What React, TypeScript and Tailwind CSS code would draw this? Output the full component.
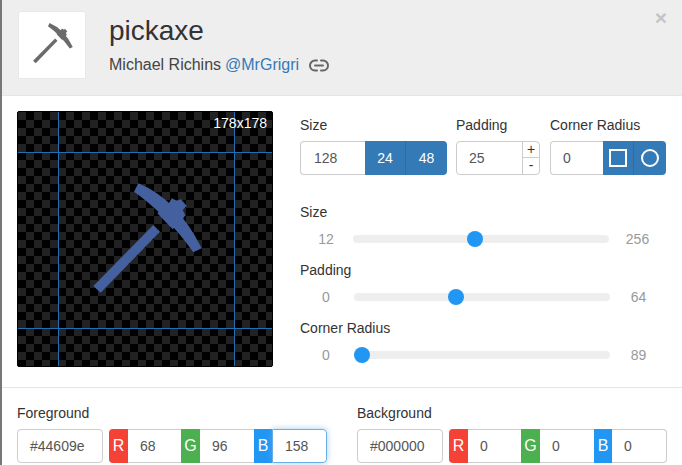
import React from "react";

const labelCls = "text-[14px] leading-[20px] text-[#333]";

function Slider({ label, min, max, left, thumb }: { label: string; min: string; max: string; left: string; thumb: number }) {
  return (
    <div className="h-[58px]">
      <div className={labelCls}>{label}</div>
      <div className="flex items-center h-[20px] mt-[7px]">
        <span className="w-[53px] text-center pr-[1px] text-[14px] text-[#999] leading-[20px]">{min}</span>
        <div className={`relative h-[8px] w-[256px] rounded-full bg-[#eee] ${left}`}>
          <span className="absolute top-[-4px] w-[16px] h-[16px] rounded-full bg-[#2196f3]" style={{ left: thumb }} />
        </div>
        <span className="w-[57px] text-center text-[14px] text-[#999] leading-[20px]">{max}</span>
      </div>
    </div>
  );
}

function ColorGroup({ label, hex, r, g, b, focus, className }: { label: string; hex: string; r: string; g: string; b: string; focus?: boolean; className: string }) {
  const chan = "flex items-center justify-center text-white text-[16px]";
  const field = "flex items-center h-full text-[14px] text-[#555] border-y border-[#ccc]";
  return (
    <div className={className}>
      <div className={labelCls}>{label}</div>
      <div className="flex gap-[6px] mt-[6px] h-[34px]">
        <div className="w-[86px] h-full flex items-center pl-[12px] text-[14px] text-[#555] border border-[#ccc] rounded-[4px]">{hex}</div>
        <div className="flex w-[218px] h-full">
          <div className={`${chan} w-[19px] bg-[#f44336] rounded-l-[4px]`}>R</div>
          <div className={`${field} w-[53px] pl-[12px]`}>{r}</div>
          <div className={`${chan} w-[19px] bg-[#4caf50]`}>G</div>
          <div className={`${field} w-[54px] pl-[12px]`}>{g}</div>
          <div className={`${chan} w-[18px] bg-[#2196f3]`}>B</div>
          <div className={
            focus
              ? "flex items-center h-full flex-1 pl-[12px] text-[14px] text-[#555] border border-[#66afe9] rounded-r-[4px] shadow-[0_0_6px_rgba(102,175,233,0.6)]"
              : "flex items-center h-full flex-1 pl-[12px] text-[14px] text-[#555] border border-l-0 border-[#ccc] rounded-r-[4px]"
          }>{b}</div>
        </div>
      </div>
    </div>
  );
}

function Pickaxe({ fill }: { fill: string }) {
  return (
    <>
      <polygon points="76.3,175 83.7,181.7 143,120.7 136.3,114" fill={fill} />
      <path d="M121.3,72.3 Q160,88 184.7,137.3 L176.3,141.3 Q150,104 117,80.7 Z" fill={fill} />
      <polygon points="140.3,102.3 153,90.7 154.7,87.3 159.7,89.7 164,88.3 169.7,95 165.7,99 168.3,104 165.7,108.3 155.7,118.3" fill={fill} />
    </>
  );
}

export default function App() {
  return (
    <div className="w-[682px] h-[465px] overflow-hidden bg-white flex font-['Liberation_Sans',Arial,sans-serif]">
      <div className="w-[2px] h-full bg-[#777] shrink-0" />
      <div className="flex-1 min-w-0">
        <header className="relative h-[96px] bg-[#eeeeee] border-b border-[#e5e5e5] flex pl-[16px] pt-[11px]">
          <div className="w-[68px] h-[68px] bg-white rounded-[2px] border border-[#e8e8e8] shrink-0">
            <svg width="66" height="66" viewBox="38 42 180 180">
              <Pickaxe fill="#6b6b6b" />
            </svg>
          </div>
          <div className="ml-[23px] mt-[2px]">
            <div className="text-[28px] leading-[36px] text-[#333]">pickaxe</div>
            <div className="flex items-center mt-[6px] h-[20px] text-[16px] text-[#444]">
              <span>Michael Richins</span>
              <span className="ml-[4px] text-[#337ab7]">@MrGrigri</span>
              <svg className="ml-[10px]" width="20" height="13" viewBox="0 0 20 13" fill="none" stroke="#666" strokeWidth="2" strokeLinecap="round">
                <path d="M8 1.5H6a5 5 0 0 0 0 10H8" />
                <path d="M12 1.5h2a5 5 0 0 1 0 10H12" />
                <path d="M6 6.5h8" />
              </svg>
            </div>
          </div>
          <span className="absolute right-[15px] top-[6px] text-[21px] leading-[24px] font-bold text-[#c4c4c4]">×</span>
        </header>

        <main className="flex h-[292px] border-b border-[#e5e5e5] pl-[15px] pt-[15px]">
          <div className="relative w-[256px] h-[256px] rounded-[2px] border border-black overflow-hidden shrink-0 bg-[#000] bg-[conic-gradient(#000_25%,#222_0_50%,#000_0_75%,#222_0)] bg-[length:16px_16px]">
            <svg className="absolute left-[-1px] top-[-1px]" width="256" height="256" viewBox="0 0 256 256">
              <Pickaxe fill="#44609e" />
              <path d="M0 41.5H256M0 217.5H256M41.5 0V256M217.5 0V256" stroke="#1f6fb2" strokeWidth="1" fill="none" />
            </svg>
            <span className="absolute right-[5px] top-[3px] text-[14px] leading-[16px] text-white">178x178</span>
          </div>

          <div className="ml-[27px] flex-1 min-w-0 pt-[4px]">
            <div className="flex">
              <div className="w-[156px]">
                <div className={labelCls}>Size</div>
                <div className="flex h-[34px] mt-[6px] w-[147px] text-[14px]">
                  <div className="w-[65px] flex items-center pl-[13px] text-[#555] border border-r-0 border-[#ccc] rounded-l-[4px]">128</div>
                  <div className="w-[41px] flex items-center justify-center bg-[#337ab7] text-white border-r border-[#2e6da4]">24</div>
                  <div className="w-[41px] flex items-center justify-center bg-[#337ab7] text-white rounded-r-[4px]">48</div>
                </div>
              </div>
              <div className="w-[94px]">
                <div className={labelCls}>Padding</div>
                <div className="flex h-[34px] mt-[6px] w-[84px] border border-[#ccc] rounded-[4px] text-[14px] text-[#555]">
                  <div className="w-[66px] flex items-center pl-[12px] border-r border-[#ccc]">25</div>
                  <div className="flex-1 flex flex-col text-[#333] text-[14px] leading-[15px] text-center">
                    <span className="h-[16px] border-b border-[#ccc]">+</span>
                    <span className="h-[16px]">-</span>
                  </div>
                </div>
              </div>
              <div>
                <div className={labelCls}>Corner Radius</div>
                <div className="flex h-[34px] mt-[6px] w-[116px]">
                  <div className="w-[53px] flex items-center pl-[12px] text-[14px] text-[#555] border border-r-0 border-[#ccc] rounded-l-[4px]">0</div>
                  <div className="w-[31px] flex items-center justify-center bg-[#337ab7] border-r border-[#2e6da4]">
                    <span className="block w-[18px] h-[18px] border-2 border-white" />
                  </div>
                  <div className="w-[32px] flex items-center justify-center bg-[#337ab7] rounded-r-[4px]">
                    <span className="block w-[18px] h-[18px] border-2 border-white rounded-full" />
                  </div>
                </div>
              </div>
            </div>
            <div className="mt-[27px]">
              <Slider label="Size" min="12" max="256" left="" thumb={114} />
              <Slider label="Padding" min="0" max="64" left="ml-[1px]" thumb={94} />
              <Slider label="Corner Radius" min="0" max="89" left="ml-[1px]" thumb={0} />
            </div>
          </div>
        </main>

        <section className="flex pl-[15px] pt-[15px]">
          <ColorGroup className="w-[340px]" label="Foreground" hex="#44609e" r="68" g="96" b="158" focus />
          <ColorGroup className="w-[310px]" label="Background" hex="#000000" r="0" g="0" b="0" />
        </section>
      </div>
    </div>
  );
}
